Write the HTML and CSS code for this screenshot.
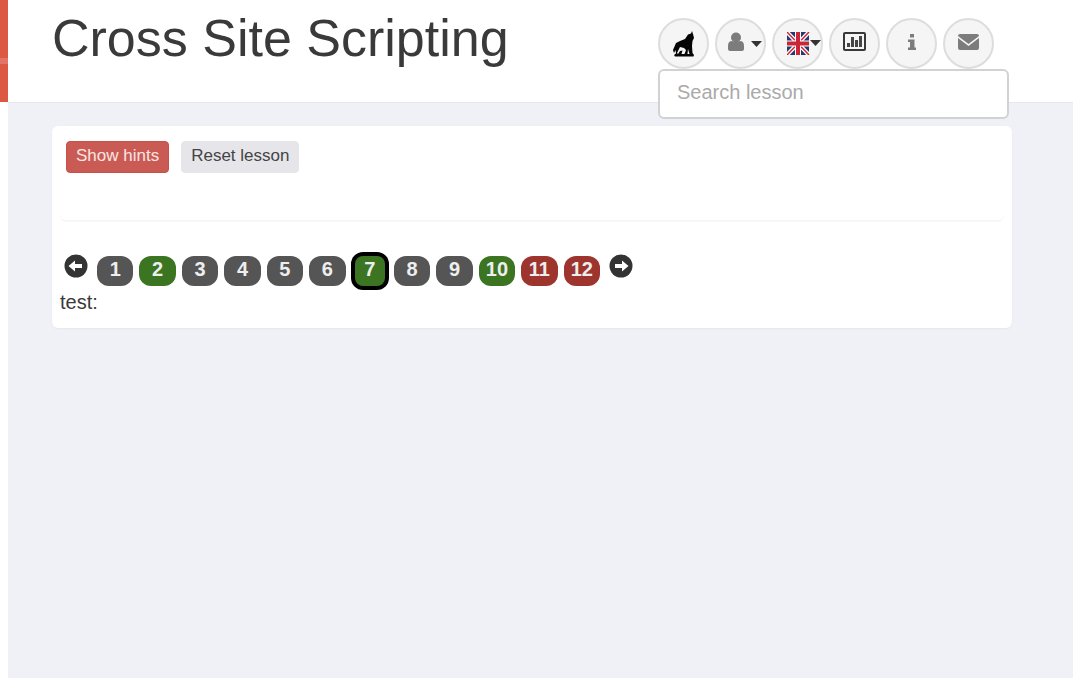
FILE: index.html
```html
<!DOCTYPE html>
<html lang="en">
<head>
<meta charset="utf-8">
<title>Cross Site Scripting</title>
<link rel="stylesheet" href="styles.css">
</head>
<body>
<div class="app">
  <aside class="sidebar"><div class="brand"><span class="brand-line"></span></div></aside>
  <div class="page">
    <header class="header">
      <h1 class="title">Cross Site Scripting</h1>
      <div class="tools">
        <div class="toolbar">
          <button class="round" type="button" aria-label="WebWolf">
            <svg width="24" height="26" viewBox="0 0 24 26"><path fill="#050505" d="M20 0 L21 3 L22 7 L20.500 10 L20 15 L20.500 22 L22 24 L21.500 25.500 H3 L2 24 L4 22.500 L3.500 19 L2 22 L1 19 L4 12 L8 10 L13 8 L16 3.500 L19 2.500 Z"/><path fill="#f5f5f5" d="M8 16 L12 17 L14 19 L12.500 23 H9.500 L10.500 19.500 L8 20 L6 23 L5 22 Z M16 18 L17.500 23 H15.500 Z"/></svg>
          </button>
          <button class="round" type="button" aria-label="User menu">
            <svg width="36" height="20" viewBox="0 0 36 20"><path fill="#7c7c7c" d="M1 17 V14 Q1 9 5 9 Q9 11 13 9 Q17 9 17 14 V17 Q17 19 15 19 H3 Q1 19 1 17Z"/><circle cx="9" cy="5.500" r="5" fill="#7c7c7c"/><path fill="#333" d="M24 9 H35 L29.500 15Z"/></svg>
          </button>
          <button class="round language" type="button" aria-label="Language">
            <svg width="34" height="23" viewBox="0 0 34 23"><path fill="#27386f" d="M0 0H22V23H0Z"/><path stroke="#fff" stroke-width="4" d="M0 0L22 23M22 0L0 23"/><path stroke="#ca2638" stroke-width="1.500" d="M0 0L22 23M22 0L0 23"/><path stroke="#fff" stroke-width="6" d="M11 0V23M0 11.500H22"/><path stroke="#ca2638" stroke-width="4" d="M11 0V23M0 11.500H22"/><path fill="#333" d="M23 8H34L28.500 14Z"/></svg>
          </button>
          <button class="round" type="button" aria-label="Report card">
            <svg width="23" height="19" viewBox="0 0 23 19"><rect x="1" y="1" width="21" height="17" rx="1" fill="none" stroke="#383838" stroke-width="2"/><path fill="#454545" d="M4 11h3v4H4zM8 5h3v10H8zM12 8h3v7h-3zM16 4h3v11h-3z"/></svg>
          </button>
          <button class="round" type="button" aria-label="About">
            <svg width="10" height="18" viewBox="0 0 10 18"><path fill="#7c7c7c" d="M3 1H7V4.500H3ZM1 6.500H7.500V14.500H9V17H1V14.500H3V9H1Z"/></svg>
          </button>
          <button class="round" type="button" aria-label="Contact">
            <svg width="21" height="16" viewBox="0 0 21 16"><path fill="#7c7c7c" d="M2 0H19Q21 0 21 2L10.500 10L0 2Q0 0 2 0ZM0 4L10.500 12L21 4V14Q21 16 19 16H2Q0 16 0 14Z"/></svg>
          </button>
        </div>
        <input class="search" type="text" placeholder="Search lesson" aria-label="Search lesson">
      </div>
    </header>
    <main class="main">
      <section class="card">
        <div class="actions">
          <button class="btn btn-danger" type="button">Show hints</button>
          <button class="btn btn-default" type="button">Reset lesson</button>
        </div>
        <nav class="pager" aria-label="Lesson pages">
          <a class="arrow" href="#previous" aria-label="Previous page"><svg width="24" height="24" viewBox="0 0 24 24"><circle cx="12" cy="12" r="11.500" fill="#333"/><path fill="#fff" d="M4.500 12L11 6.500V10H18V14H11V17.500Z"/></svg></a>
          <div class="pages">
            <a class="page-link" href="#1">1</a>
            <a class="page-link solved" href="#2">2</a>
            <a class="page-link" href="#3">3</a>
            <a class="page-link" href="#4">4</a>
            <a class="page-link" href="#5">5</a>
            <a class="page-link" href="#6">6</a>
            <a class="page-link solved current" href="#7" aria-current="page">7</a>
            <a class="page-link" href="#8">8</a>
            <a class="page-link" href="#9">9</a>
            <a class="page-link solved" href="#10">10</a>
            <a class="page-link unsolved" href="#11">11</a>
            <a class="page-link unsolved" href="#12">12</a>
          </div>
          <a class="arrow" href="#next" aria-label="Next page"><svg width="24" height="24" viewBox="0 0 24 24"><circle cx="12" cy="12" r="11.500" fill="#333"/><path fill="#fff" d="M19.500 12L13 6.500V10H6V14H13V17.500Z"/></svg></a>
        </nav>
        <p class="output">test:</p>
      </section>
    </main>
  </div>
</div>
</body>
</html>
```
FILE: styles.css
```css
* { box-sizing: border-box; }
body {
  margin: 0;
  color: #3a3a3a;
  background: #fff;
  font-family: "Liberation Sans", Arial, sans-serif;
  font-size: 20px;
}
.app { display: flex; min-height: 100vh; }
.sidebar { width: 8px; flex: none; }
.brand { height: 102px; padding-top: 58px; background: #dc5843; }
.brand-line { display: block; height: 6px; background: #e07567; }
.page { flex: 1; min-width: 0; background: #eff1f6; }
.header {
  display: flex;
  justify-content: space-between;
  height: 103px;
  padding: 0 64px 0 44px;
  border-bottom: 1px solid #e6e7ea;
  background: #fff;
}
.title {
  margin: 0;
  padding-top: 8px;
  font-size: 52px;
  font-weight: 400;
  line-height: 60px;
}
.tools { width: 351px; padding-top: 18px; }
.toolbar { display: flex; gap: 6px; }
.round {
  display: flex;
  align-items: center;
  justify-content: center;
  width: 51px;
  height: 51px;
  padding: 0;
  border: 2px solid #ddd;
  border-radius: 50%;
  background: #f5f5f5;
}
.round svg { flex: none; margin-bottom: 4px; }
.round:first-child svg { margin-bottom: 0; }
.round:nth-child(2) svg { margin-left: 8px; }
.language svg { margin-left: 12px; margin-bottom: 0; }
.search {
  display: block;
  width: 100%;
  height: 50px;
  padding: 0 17px 3px;
  border: 2px solid #d2d2d2;
  border-radius: 6px;
  background: #fff;
  color: #555;
  font: 20px "Liberation Sans", Arial, sans-serif;
}
.search::placeholder { color: #aaa; opacity: 1; }
.main { padding: 23px 61px 24px 44px; }
.card {
  padding: 0 8px 14px;
  border-radius: 6px;
  background: #fff;
  box-shadow: 0 1px 2px #e6e7eb;
}
.actions {
  display: flex;
  align-items: flex-start;
  gap: 12px;
  height: 94px;
  padding: 15px 6px 0;
  border-radius: 6px;
  box-shadow: 0 2px 1px #f7f7f7;
}
.btn {
  height: 32px;
  padding: 0 9px 3px;
  border: 1px solid #e6e6ea;
  border-radius: 4px;
  color: #444;
  background: #e6e6ea;
  font: 17px "Liberation Sans", Arial, sans-serif;
}
.btn-danger { border-color: #c9504a; background: #c95b54; color: #fbe5e3; }
.pager { display: flex; gap: 9px; padding: 34px 4px 0; }
.arrow { display: block; height: 24px; }
.pages {
  display: grid;
  grid-template-columns: repeat(12, 1fr);
  gap: 6px;
  width: 503px;
  padding-top: 2px;
}
.page-link {
  height: 30px;
  border-radius: 12px;
  background: #555;
  color: #eee;
  font-weight: 700;
  line-height: 26px;
  text-align: center;
  text-decoration: none;
}
.solved { background: #3c7521; }
.unsolved { background: #9d342d; }
.current { border-radius: 8px; box-shadow: 0 0 0 4px #000; margin: 0 3px; }
.output { margin: 4px 0 0; line-height: 24px; }
```
